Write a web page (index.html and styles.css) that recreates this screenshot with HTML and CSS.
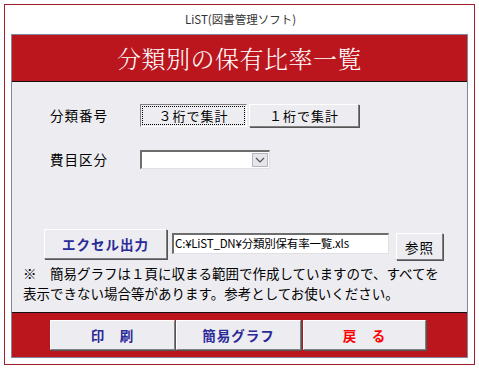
FILE: index.html
```html
<!DOCTYPE html>
<html lang="ja">
<head>
  <meta charset="UTF-8" />
  <title>LiST(図書管理ソフト)</title>
  <link rel="stylesheet" href="styles.css">
</head>
<body>

  <div class="frame">
    <div class="caption">LiST(図書管理ソフト)</div>

    <div class="panel">
      <div class="header">分類別の保有比率一覧</div>

      <div class="content">
        <div class="row row-class">
          <div class="label">分類番号</div>
          <button class="btn btn-pressed btn-3">３桁で集計</button>
          <button class="btn btn-1">１桁で集計</button>
        </div>

        <div class="row row-cost">
          <div class="label">費目区分</div>
          <div class="combo">
            <span class="combo-arrow">
              <svg width="10" height="6" viewBox="0 0 10 6"><path d="M1 1 L5 5 L9 1" fill="none" stroke="#555" stroke-width="1.2"/></svg>
            </span>
          </div>
        </div>

        <div class="row row-excel">
          <button class="btn btn-blue btn-excel">エクセル出力</button>
          <div class="path">C:¥LiST_DN¥分類別保有率一覧.xls</div>
          <button class="btn btn-ref">参照</button>
        </div>

        <div class="note">
          <p>※　簡易グラフは１頁に収まる範囲で作成していますので、すべてを</p>
          <p>表示できない場合等があります。参考としてお使いください。</p>
        </div>
      </div>

      <div class="footer">
        <button class="btn btn-blue btn-foot">印　刷</button>
        <button class="btn btn-blue btn-foot">簡易グラフ</button>
        <button class="btn btn-red btn-foot btn-back">戻　る</button>
      </div>
    </div>
  </div>

</body>
</html>
```

FILE: styles.css
```css
:root {
  --red: #bb161e;
  --frame: #9e1f28;
  --face: #ededf1;
  --shadow: #808080;
  --blue: #2a2a98;
  --font: "Noto Sans CJK JP", "DejaVu Sans", sans-serif;
}

* {
  margin: 0;
  padding: 0;
  box-sizing: border-box;
}

body {
  background: #fff;
  font-family: var(--font);
  width: 479px;
  height: 370px;
  padding-top: 4px;
  padding-left: 4px;
}

.frame {
  width: 471px;
  height: 361px;
  border: 1px solid var(--frame);
  background: #fff;
}

.caption {
  height: 29px;
  line-height: 29px;
  text-align: center;
  font-size: 11.5px;
  color: #333;
  padding-left: 2px;
}

.panel {
  margin-left: 6px;
  width: 457px;
  height: 324px;
  border: 1px solid #7d8a99;
  display: flex;
  flex-direction: column;
}

.header {
  height: 47px;
  background: var(--red);
  border-bottom: 1px solid #111;
  color: #fff;
  font-family: "Noto Serif CJK JP", "Noto Sans CJK JP", serif;
  font-weight: 300;
  font-size: 24px;
  line-height: 46px;
  text-align: center;
  letter-spacing: 0.5px;
}

.content {
  flex: 1;
  background: var(--face);
  padding-left: 38px;
}

.row {
  display: flex;
  align-items: flex-start;
}

.label {
  width: 90px;
  font-size: 13.5px;
  color: #000;
  letter-spacing: 1px;
}

.btn {
  background: var(--face);
  border: 1px solid;
  border-color: #fff var(--shadow) var(--shadow) #fff;
  box-shadow: 1px 1px 0 #555;
  font-family: var(--font);
  color: #000;
  cursor: pointer;
}

.btn-blue {
  color: var(--blue);
  font-weight: 700;
}

.btn-red {
  color: #f00;
  font-weight: 700;
}

.btn-pressed {
  border-color: var(--shadow) #fff #fff var(--shadow);
  box-shadow: none;
  outline: 1px dotted #000;
  outline-offset: -3px;
}

.row-class {
  margin-top: 22px;
  height: 23px;
}

.row-class .label {
  line-height: 23px;
}

.btn-3,
.btn-1 {
  height: 23px;
  font-size: 13px;
  letter-spacing: 1px;
}

.btn-3 {
  width: 107px;
  margin-right: 2px;
}

.btn-1 {
  width: 110px;
}

.row-cost {
  margin-top: 23px;
  height: 19px;
}

.row-cost .label {
  line-height: 19px;
}

.combo {
  width: 130px;
  height: 19px;
  background: #fff;
  border: 1px solid;
  border-color: #6d6d6d #e0e0e0 #e0e0e0 #6d6d6d;
  border-top-width: 2px;
  border-left-width: 2px;
  display: flex;
  justify-content: flex-end;
  align-items: center;
  padding-right: 1px;
}

.combo-arrow {
  width: 16px;
  height: 14px;
  background: #e6e6ea;
  border: 1px solid #b5b5bd;
  display: flex;
  justify-content: center;
  align-items: center;
}

.row-excel {
  margin-top: 60px;
  margin-left: -6px;
  height: 32px;
}

.btn-excel {
  width: 123px;
  height: 30px;
  font-size: 13.5px;
  letter-spacing: 1px;
}

.path {
  width: 217px;
  height: 21px;
  margin-top: 4px;
  margin-left: 5px;
  background: #fff;
  border: 1px solid;
  border-color: #6d6d6d #e0e0e0 #e0e0e0 #6d6d6d;
  border-top-width: 2px;
  border-left-width: 2px;
  font-size: 11.5px;
  line-height: 17px;
  padding-left: 1px;
  white-space: nowrap;
  overflow: hidden;
  letter-spacing: -0.2px;
}

.btn-ref {
  width: 47px;
  height: 27px;
  margin-top: 4px;
  margin-left: 7px;
  font-size: 13.5px;
  letter-spacing: 1px;
}

.note {
  margin-left: -27px;
  margin-top: 3px;
  font-size: 13.5px;
  line-height: 19.5px;
  color: #000;
  white-space: nowrap;
}

.footer {
  height: 45px;
  background: var(--red);
  border-top: 1px solid #111;
  display: flex;
  align-items: flex-start;
  padding-top: 7px;
  padding-left: 38px;
  gap: 1px;
}

.btn-foot {
  width: 125px;
  height: 30px;
  font-size: 13.5px;
  letter-spacing: 1px;
}

.btn-back {
  width: 123px;
  margin-left: 1px;
}
```
